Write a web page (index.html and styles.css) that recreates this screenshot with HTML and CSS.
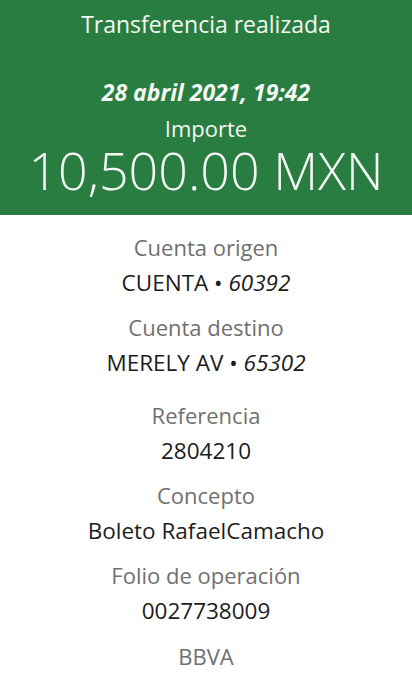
FILE: index.html
```html
<!DOCTYPE html>
<html lang="es">
<head>
    <meta charset="UTF-8">
    <meta name="viewport" content="width=device-width, initial-scale=1.0">
    <title>Transferencia realizada</title>
    <link rel="stylesheet" href="styles.css">
</head>
<body>
    <div class="header">
        <h1 class="title">Transferencia realizada</h1>
        <p class="date">28 abril 2021, 19:42</p>
        <p class="amount-label">Importe</p>
        <p class="amount">10,500.00 MXN</p>
    </div>

    <div class="details">
        <div class="row">
            <p class="label">Cuenta origen</p>
            <p class="value">CUENTA &bull; <em>60392</em></p>
        </div>
        <div class="row">
            <p class="label">Cuenta destino</p>
            <p class="value">MERELY AV &bull; <em>65302</em></p>
        </div>
        <div class="row row-wide">
            <p class="label">Referencia</p>
            <p class="value">2804210</p>
        </div>
        <div class="row">
            <p class="label">Concepto</p>
            <p class="value">Boleto RafaelCamacho</p>
        </div>
        <div class="row">
            <p class="label">Folio de operación</p>
            <p class="value">0027738009</p>
        </div>
        <div class="row row-bank">
            <p class="label">BBVA</p>
        </div>
    </div>
</body>
</html>
```

FILE: styles.css
```css
body {
    margin: 0;
    font-family: "Open Sans", Roboto, sans-serif;
    background-color: #fff;
    text-align: center;
}

p,
h1 {
    margin: 0;
    font-weight: normal;
}

.header {
    background-color: #2a7d40;
    color: #f4f8f4;
    padding: 6px 0 19px;
}

.title {
    font-size: 23px;
    line-height: 36px;
}

.date {
    margin-top: 32px;
    font-size: 23px;
    line-height: 36px;
    font-weight: bold;
    font-style: italic;
}

.amount-label {
    margin-top: 2px;
    font-size: 22px;
    line-height: 32px;
}

.amount {
    font-size: 52px;
    line-height: 52px;
    font-weight: 300;
}

.details {
    padding-top: 14px;
}

.row {
    margin-bottom: 8px;
}

.row-wide {
    margin-top: 16px;
}

.row-bank {
    margin-top: 9px;
}

.label {
    font-size: 22px;
    line-height: 36px;
    color: #707070;
}

.value {
    font-size: 22.5px;
    line-height: 36px;
    color: #1c1c1c;
}

.value em {
    font-style: italic;
}
```
